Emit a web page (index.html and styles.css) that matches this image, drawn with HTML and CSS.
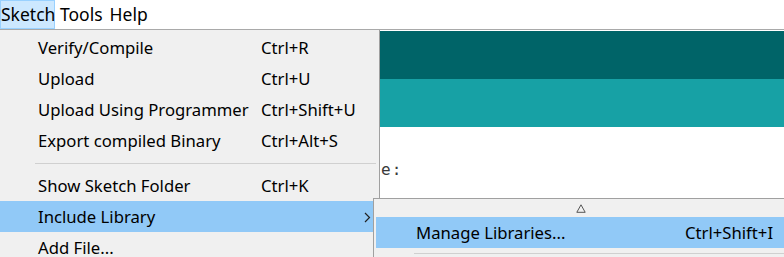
FILE: index.html
```html
<!DOCTYPE html>
<html>
<head>
<meta charset="utf-8">
<link rel="stylesheet" href="styles.css">
</head>
<body>
<div class="app">
  <div class="menubar">
    <span class="mb-item active">Sketch</span>
    <span class="mb-item">Tools</span>
    <span class="mb-item">Help</span>
  </div>
  <div class="editor">
    <div class="gap"></div>
    <div class="header"></div>
    <div class="toolbar"></div>
    <div class="code">
      <div class="code-line">e:</div>
    </div>
  </div>

  <div class="dropdown">
    <div class="item"><span class="label">Verify/Compile</span><span class="key">Ctrl+R</span></div>
    <div class="item"><span class="label">Upload</span><span class="key">Ctrl+U</span></div>
    <div class="item"><span class="label">Upload Using Programmer</span><span class="key">Ctrl+Shift+U</span></div>
    <div class="item"><span class="label">Export compiled Binary</span><span class="key">Ctrl+Alt+S</span></div>
    <div class="sep"></div>
    <div class="item"><span class="label">Show Sketch Folder</span><span class="key">Ctrl+K</span></div>
    <div class="item hl"><span class="label">Include Library</span><span class="key"></span>
      <svg class="chev" width="7" height="11" viewBox="0 0 7 11"><path d="M1 1 L5.5 5.5 L1 10" fill="none" stroke="#222" stroke-width="1.2"/></svg>
    </div>
    <div class="item"><span class="label">Add File...</span><span class="key"></span></div>
  </div>

  <div class="submenu">
    <div class="scroll-up">
      <svg width="10" height="9" viewBox="0 0 10 9"><path d="M5 0.8 L9.2 8.3 L0.8 8.3 Z" fill="none" stroke="#555" stroke-width="1"/></svg>
    </div>
    <div class="sitem hl"><span class="slabel">Manage Libraries...</span><span class="skey">Ctrl+Shift+I</span></div>
    <div class="ssep"></div>
  </div>
</div>
</body>
</html>
```

FILE: styles.css
```css
html, body {
  margin: 0;
  padding: 0;
  background: #ffffff;
  width: 784px;
  height: 257px;
  overflow: hidden;
}

.app {
  position: relative;
  width: 784px;
  height: 257px;
  overflow: hidden;
  font-family: "Noto Sans", "Open Sans", sans-serif;
  font-size: 16.7px;
  color: #000;
}

.menubar {
  height: 29px;
  border-bottom: 1px solid #a9a9a9;
  display: flex;
  align-items: stretch;
  gap: 3px;
  background: #fff;
}

.mb-item {
  display: flex;
  align-items: center;
  padding: 1px 2px 0 2px;
  line-height: 1;
  font-size: 17.5px;
}

.mb-item.active {
  background: #cce8ff;
  box-shadow: inset 0 0 0 1px #99d1ff;
  width: 55px;
  padding-left: 1px;
  box-sizing: border-box;
}

.editor {
  display: flex;
  flex-direction: column;
}

.gap {
  height: 1px;
  background: #fff;
}

.header {
  height: 48px;
  background: #006468;
}

.toolbar {
  height: 48px;
  background: #17a1a5;
}

.code {
  height: 130px;
  background: #fff;
  padding: 33px 0 0 381px;
  box-sizing: border-box;
}

.code-line {
  font-family: "DejaVu Sans Mono", "Liberation Mono", monospace;
  font-size: 16px;
  color: #3a3a3a;
  letter-spacing: 1px;
}

.dropdown {
  position: absolute;
  left: 0;
  top: 30px;
  width: 380px;
  height: 240px;
  background: #f0f0f0;
  border-right: 1px solid #a0a0a0;
  padding-top: 2px;
  box-sizing: border-box;
}

.item {
  position: relative;
  height: 31px;
  display: flex;
  align-items: center;
  padding-left: 38px;
  box-sizing: border-box;
}

.item.hl {
  background: #91c9f7;
}

.label {
  width: 223px;
  white-space: nowrap;
}

.key {
  white-space: nowrap;
}

.chev {
  position: absolute;
  left: 364px;
  top: 11px;
}

.sep {
  height: 14px;
  display: flex;
  align-items: center;
  margin-left: 35px;
  margin-right: 3px;
}

.sep::before {
  content: "";
  flex: 1;
  height: 1px;
  background: #d0d0d0;
}

.submenu {
  position: absolute;
  left: 373px;
  top: 198px;
  width: 420px;
  height: 70px;
  background: #f0f0f0;
  border: 1px solid #a0a0a0;
  box-sizing: border-box;
  padding-left: 2px;
}

.scroll-up {
  height: 18px;
  display: flex;
  align-items: center;
  padding-left: 200px;
  padding-top: 1px;
  box-sizing: border-box;
}

.sitem {
  height: 31px;
  display: flex;
  align-items: center;
  padding-left: 40px;
  box-sizing: border-box;
}

.sitem.hl {
  background: #91c9f7;
}

.slabel {
  width: 269px;
  white-space: nowrap;
}

.skey {
  white-space: nowrap;
}

.ssep {
  height: 1px;
  margin: 5px 0 0 38px;
  background: #d0d0d0;
}
```
